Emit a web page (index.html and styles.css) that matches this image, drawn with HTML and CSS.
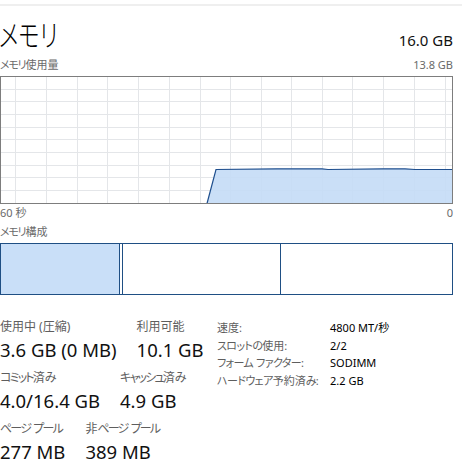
FILE: index.html
```html
<!DOCTYPE html>
<html lang="ja">
<head>
<meta charset="utf-8">
<link rel="stylesheet" href="styles.css">
</head>
<body>
<div class="topline"></div>
<div class="page">
  <div class="header">
    <div class="title">メモリ</div>
    <div class="total">16.0 GB</div>
  </div>
  <div class="caprow">
    <span><span class="kn">メモリ</span>使用量</span>
    <span>13.8 GB</span>
  </div>
  <svg class="graph" width="453" height="128" viewBox="0 0 453 128">
    <g stroke="#e4e6e9" stroke-width="1">
      <line x1="0" y1="13.5" x2="453" y2="13.5"/>
      <line x1="0" y1="25.5" x2="453" y2="25.5"/>
      <line x1="0" y1="38.5" x2="453" y2="38.5"/>
      <line x1="0" y1="51.5" x2="453" y2="51.5"/>
      <line x1="0" y1="63.5" x2="453" y2="63.5"/>
      <line x1="0" y1="76.5" x2="453" y2="76.5"/>
      <line x1="0" y1="89.5" x2="453" y2="89.5"/>
      <line x1="0" y1="101.5" x2="453" y2="101.5"/>
      <line x1="0" y1="114.5" x2="453" y2="114.5"/>
      <line x1="15.5" y1="0" x2="15.5" y2="128"/>
      <line x1="46.5" y1="0" x2="46.5" y2="128"/>
      <line x1="77.5" y1="0" x2="77.5" y2="128"/>
      <line x1="107.5" y1="0" x2="107.5" y2="128"/>
      <line x1="138.5" y1="0" x2="138.5" y2="128"/>
      <line x1="169.5" y1="0" x2="169.5" y2="128"/>
      <line x1="200.5" y1="0" x2="200.5" y2="128"/>
      <line x1="230.5" y1="0" x2="230.5" y2="128"/>
      <line x1="261.5" y1="0" x2="261.5" y2="128"/>
      <line x1="291.5" y1="0" x2="291.5" y2="128"/>
      <line x1="322.5" y1="0" x2="322.5" y2="128"/>
      <line x1="352.5" y1="0" x2="352.5" y2="128"/>
      <line x1="383.5" y1="0" x2="383.5" y2="128"/>
      <line x1="414.5" y1="0" x2="414.5" y2="128"/>
      <line x1="445.5" y1="0" x2="445.5" y2="128"/>
    </g>
    <polygon points="207,127.5 216,93.5 277,92.8 322,92.8 328,93.5 383,92.8 405,92.8 415,93.5 452,93.5 452,127.5" fill="#c4dbf6" fill-opacity="0.9"/>
    <polyline points="207,127.5 216,93.5 277,92.8 322,92.8 328,93.5 383,92.8 405,92.8 415,93.5 452,93.5" fill="none" stroke="#1f4f8e" stroke-width="1.2"/>
    <rect x="0.5" y="0.5" width="452" height="127" fill="none" stroke="#7d7d7d" stroke-width="1"/>
  </svg>
  <div class="caprow axis">
    <span>60 秒</span>
    <span>0</span>
  </div>
  <div class="caprow section">
    <span><span class="kn">メモリ</span>構成</span>
  </div>
  <div class="comp">
    <div class="seg inuse"></div>
    <div class="seg modified"></div>
    <div class="seg standby"></div>
    <div class="seg free"></div>
  </div>
  <div class="stats">
    <div class="left">
      <div class="row">
        <div class="stat"><div class="lbl">使用中 (圧縮)</div><div class="val">3.6 GB (0 MB)</div></div>
        <div class="stat"><div class="lbl">利用可能</div><div class="val">10.1 GB</div></div>
      </div>
      <div class="row">
        <div class="stat"><div class="lbl"><span class="kn">コミット</span>済<span class="kn">み</span></div><div class="val">4.0/16.4 GB</div></div>
        <div class="stat"><div class="lbl"><span class="kn">キャッシュ</span>済<span class="kn">み</span></div><div class="val">4.9 GB</div></div>
      </div>
      <div class="row">
        <div class="stat"><div class="lbl"><span class="kn">ページ</span> <span class="kn">プール</span></div><div class="val">277 MB</div></div>
        <div class="stat"><div class="lbl">非<span class="kn">ページ</span> <span class="kn">プール</span></div><div class="val">389 MB</div></div>
      </div>
    </div>
    <div class="props">
      <div class="pk">速度:</div><div class="pv">4800 MT/秒</div>
      <div class="pk"><span class="kn2">スロットの</span>使用:</div><div class="pv">2/2</div>
      <div class="pk"><span class="kn2">フォーム</span> <span class="kn2">ファクター</span>:</div><div class="pv">SODIMM</div>
      <div class="pk"><span class="kn2">ハードウェア</span>予約済<span class="kn2">み</span>:</div><div class="pv">2.2 GB</div>
    </div>
  </div>
</div>
</body>
</html>
```

FILE: styles.css
```css
html, body {
  margin: 0;
  padding: 0;
  background: #ffffff;
}
body {
  font-family: "Noto Sans", "Noto Sans CJK JP", sans-serif;
  font-feature-settings: "palt";
  color: #000;
  width: 462px;
  overflow: hidden;
}
.topline {
  margin-top: 4px;
  height: 2px;
  background: #efefef;
}
.page {
  padding: 0 9px 0 0;
}
.header {
  display: flex;
  justify-content: space-between;
  align-items: baseline;
  margin-top: 7px;
  height: 44px;
}
.title {
  display: inline-block;
  font-size: 30px;
  font-weight: 300;
  line-height: 44px;
  transform: scaleX(0.74);
  transform-origin: left center;
  margin-left: -1px;
}
.total {
  font-size: 15px;
  color: #111;
}
.caprow {
  display: flex;
  justify-content: space-between;
  font-size: 11px;
  line-height: 16px;
  color: #6a6a6a;
}
.caprow .kn {
  letter-spacing: -1.2px;
}
.graph {
  display: block;
  margin-top: 3px;
}
.axis {
  margin-top: 1px;
}
.section {
  margin-top: 3px;
}
.comp {
  margin-top: 3px;
  height: 50px;
  border: 1px solid #1f4f84;
  display: flex;
}
.seg {
  border-right: 1px solid #1f4f84;
}
.inuse {
  width: 118px;
  background: #c9dff8;
}
.modified {
  width: 2px;
}
.standby {
  width: 157px;
}
.free {
  flex: 1;
  border-right: none;
}
.stats {
  display: flex;
  margin-top: 24px;
}
.left {
  width: 217px;
  display: flex;
  flex-direction: column;
  gap: 8px;
}
.row {
  display: flex;
  gap: 20px;
}
.lbl {
  font-size: 12px;
  line-height: 16px;
  color: #5e5e5e;
  white-space: nowrap;
}
.lbl .kn {
  letter-spacing: -1.8px;
}
.val {
  margin-top: 3px;
  font-size: 18.5px;
  line-height: 24px;
  color: #111;
  white-space: nowrap;
}
.props {
  display: grid;
  grid-template-columns: 113px auto;
  grid-auto-rows: 17.7px;
  align-content: start;
  font-size: 11px;
  line-height: 17.7px;
  white-space: nowrap;
}
.pk {
  color: #5e5e5e;
}
.pk .kn2 {
  letter-spacing: -0.6px;
}
.pv {
  color: #000;
}
```
